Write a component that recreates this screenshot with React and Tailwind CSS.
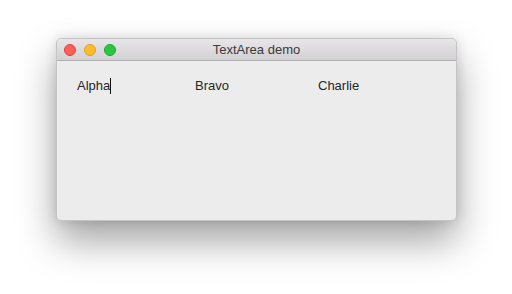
export default function App() {
  return (
    <div className="w-[512px] h-[294px] bg-white pt-[38px] pl-[56px]" style={{ fontFamily: '"Helvetica Neue", "Liberation Sans", Arial, sans-serif' }}>
      {/* window */}
      <div className="w-[401px] h-[183px] rounded-[5px] overflow-hidden flex flex-col bg-[#ececec] border border-[#c4c4c4] shadow-[0_20px_38px_rgba(0,0,0,0.36),0_0_12px_rgba(0,0,0,0.12)]">
        {/* title bar */}
        <div className="relative h-[22px] shrink-0 flex items-center px-[7px] bg-gradient-to-b from-[#e8e6e8] to-[#d2d0d2] border-b border-[#b0b0b0]">
          <div className="flex items-center gap-[8px]">
            <span className="w-[12px] h-[12px] rounded-full bg-[#fc5f57] border border-[#e0443e]" />
            <span className="w-[12px] h-[12px] rounded-full bg-[#fdbc2e] border border-[#dea123]" />
            <span className="w-[12px] h-[12px] rounded-full bg-[#28c840] border border-[#1aab29]" />
          </div>
          <div className="absolute inset-0 flex items-center justify-center text-[13px] text-[#3b3b3b]">
            TextArea demo
          </div>
        </div>
        {/* text area */}
        <div className="flex-1 pt-[17px] pl-[20px] text-[13px] text-[#262626] leading-[16px]">
          <div className="flex">
            <span className="w-[118px] flex items-center">
              Alpha<span className="inline-block w-px h-[16px] bg-[#111]" />
            </span>
            <span className="w-[123px]">Bravo</span>
            <span>Charlie</span>
          </div>
        </div>
      </div>
    </div>
  );
}
